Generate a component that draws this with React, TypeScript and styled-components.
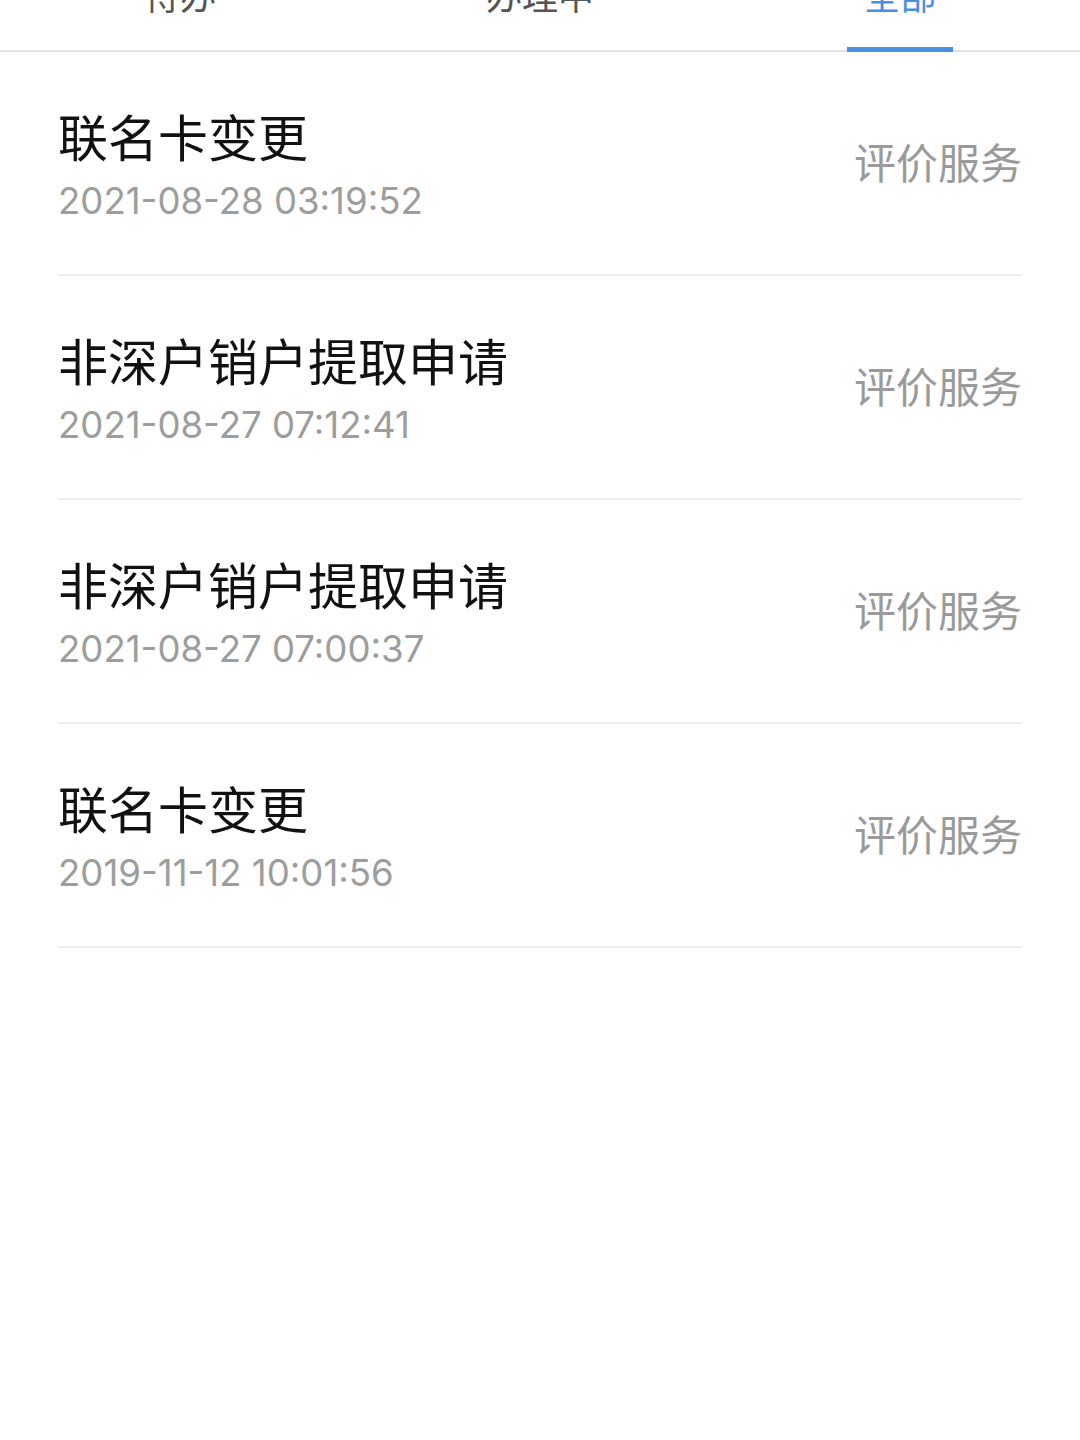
import styled, { createGlobalStyle } from "styled-components"

const GlobalStyle = createGlobalStyle`
    html, body {
        margin: 0;
        padding: 0;
        background: #ffffff;
    }
    body {
        font-family: Inter, "Noto Sans CJK SC", sans-serif;
        -webkit-font-smoothing: antialiased;
    }
`

const Page = styled.div`
    width: 1080px;
    min-height: 1440px;
    overflow: hidden;
    background: #ffffff;
`

const TabBar = styled.div`
    display: grid;
    grid-template-columns: repeat(3, 1fr);
    height: 98px;
    margin-top: -48px;
    border-bottom: 2px solid #e3e3e3;
`

const Tab = styled.div<{ $active?: boolean }>`
    position: relative;
    display: flex;
    align-items: center;
    justify-content: center;
    padding-bottom: 14px;
    font-size: 36px;
    color: ${p => (p.$active ? "#4a90e2" : "#555555")};

    &::after {
        content: "";
        display: ${p => (p.$active ? "block" : "none")};
        position: absolute;
        left: 50%;
        bottom: -2px;
        width: 106px;
        height: 5px;
        transform: translateX(-50%);
        background: #4a90e2;
    }
`

const List = styled.div`
    display: flex;
    flex-direction: column;
    padding: 0 58px;
`

const Row = styled.div`
    display: flex;
    align-items: center;
    justify-content: space-between;
    height: 222px;
    border-bottom: 2px solid #efefef;
`

const Info = styled.div`
    display: flex;
    flex-direction: column;
    gap: 10px;
    padding-top: 5px;
`

const Title = styled.div`
    font-size: 50px;
    line-height: 60px;
    color: #111111;
`

const Time = styled.div`
    font-size: 36.6px;
    line-height: 44px;
    color: #9d9d9d;
`

const RateLink = styled.div`
    padding-bottom: 6px;
    font-size: 42px;
    color: #9a9a9a;
`

const tabs = [
    { label: "待办", active: false },
    { label: "办理中", active: false },
    { label: "全部", active: true },
]

const records = [
    { title: "联名卡变更", time: "2021-08-28 03:19:52" },
    { title: "非深户销户提取申请", time: "2021-08-27 07:12:41" },
    { title: "非深户销户提取申请", time: "2021-08-27 07:00:37" },
    { title: "联名卡变更", time: "2019-11-12 10:01:56" },
]

const App = () => {
    return (
        <>
            <GlobalStyle />
            <Page>
                <TabBar>
                    {tabs.map(t => (
                        <Tab key={t.label} $active={t.active}>{t.label}</Tab>
                    ))}
                </TabBar>
                <List>
                    {records.map((r, i) => (
                        <Row key={i}>
                            <Info>
                                <Title>{r.title}</Title>
                                <Time>{r.time}</Time>
                            </Info>
                            <RateLink>评价服务</RateLink>
                        </Row>
                    ))}
                </List>
            </Page>
        </>
    )
}

export default App
